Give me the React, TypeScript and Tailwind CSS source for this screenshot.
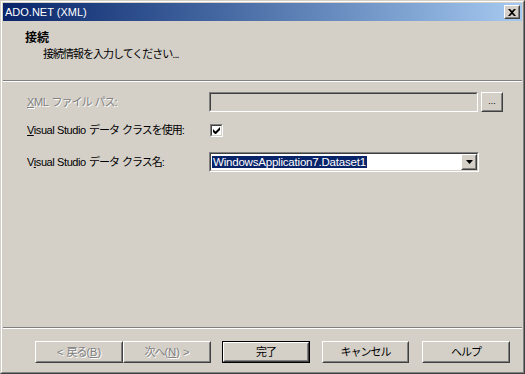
import React from "react";

const font = { fontFamily: '"Liberation Sans", "Noto Sans CJK JP", sans-serif' };

function Raised({ className = "", children }: { className?: string; children?: React.ReactNode }) {
  return (
    <div className={`border border-t-white border-l-white border-r-[#404040] border-b-[#404040] bg-[#d4d0c8] ${className}`}>
      <div className="w-full h-full border border-t-[#d4d0c8] border-l-[#d4d0c8] border-r-[#808080] border-b-[#808080] flex items-center justify-center">
        {children}
      </div>
    </div>
  );
}

function Sunken({ className = "", inner = "", children }: { className?: string; inner?: string; children?: React.ReactNode }) {
  return (
    <div className={`border border-t-[#808080] border-l-[#808080] border-r-white border-b-white ${className}`}>
      <div className={`w-full h-full border border-t-[#404040] border-l-[#404040] border-r-[#d4d0c8] border-b-[#d4d0c8] ${inner}`}>
        {children}
      </div>
    </div>
  );
}

function J({ children }: { children: React.ReactNode }) {
  return <span className="tracking-[-1px]">{children}</span>;
}

function L({ children }: { children: React.ReactNode }) {
  return <span className="tracking-[-0.4px]">{children}</span>;
}

const dis = "text-[#808080] [text-shadow:1px_1px_0_#fff]";
const base = "text-[11px] whitespace-nowrap";

export default function App() {
  return (
    <div style={font} className="w-[525px] h-[374px] bg-[#d4d0c8] text-[12px] text-black leading-none">
      <div className="w-full h-full border border-t-[#d4d0c8] border-l-[#d4d0c8] border-r-[#404040] border-b-[#404040]">
        <div className="w-full h-full border border-t-white border-l-white border-r-[#808080] border-b-[#808080] p-px flex flex-col">
          {/* title bar */}
          <div className="h-[18px] bg-gradient-to-r from-[#0a246a] to-[#a6caf0] flex items-center justify-between pl-[2px] pr-[2px]">
            <span className="text-white text-[11px] whitespace-nowrap">ADO.NET (XML)</span>
            <Raised className="w-[16px] h-[14px]">
              <svg width="8" height="7" viewBox="0 0 8 7">
                <path d="M0 0h2l2 2 2-2h2L5 3.5 8 7H6L4 5 2 7H0l3-3.5z" fill="#000" />
              </svg>
            </Raised>
          </div>
          {/* header */}
          <div className="h-[59px] pl-[22px] pt-[11px]">
            <div className="font-bold text-[12px] whitespace-nowrap">接続</div>
            <div className={`pl-[18px] mt-[5px] ${base}`}><J>接続情報を入力してください...</J></div>
          </div>
          <div className="h-px bg-[#808080]" />
          <div className="h-px bg-white" />
          {/* content */}
          <div className="flex-1 pl-[24px] pt-[10px] flex flex-col">
            <div className="flex items-center h-[20px]">
              <div className={`w-[182px] ${base} ${dis}`}>
                <L><span className="underline">X</span>ML</L> <J>ファイル</J> <J>パス:</J>
              </div>
              <Sunken className="w-[269px] h-[20px]" inner="bg-[#d4d0c8]" />
              <Raised className="ml-[3px] w-[22px] h-[20px]">
                <span className="text-[9px] leading-none -mt-[2px]">...</span>
              </Raised>
            </div>
            <div className="flex items-center h-[13px] mt-[12px]">
              <div className={`w-[183px] ${base}`}>
                <L><span className="underline">V</span>isual Studio</L> <J>データ</J> <J>クラスを使用:</J>
              </div>
              <Sunken className="w-[13px] h-[13px]" inner="bg-white flex items-center justify-center">
                <svg width="7" height="7" viewBox="0 0 7 7">
                  <path d="M0 2v3l2 2h1l4-4V0L2.5 4.5z" fill="#000" />
                </svg>
              </Sunken>
            </div>
            <div className="flex items-center h-[20px] mt-[15px]">
              <div className={`w-[182px] ${base}`}>
                <L>V<span className="underline">i</span>sual Studio</L> <J>データ</J> <J>クラス名:</J>
              </div>
              <Sunken className="w-[270px] h-[20px]" inner="bg-white flex items-center">
                <div className="flex-1 pl-px whitespace-nowrap">
                  <span className="bg-[#0a246a] text-white px-px text-[11.5px] tracking-[-0.2px]">WindowsApplication7.Dataset1</span>
                </div>
                <Raised className="w-[16px] h-[16px]">
                  <svg width="7" height="4" viewBox="0 0 7 4">
                    <path d="M0 0h7L3.5 4z" fill="#000" />
                  </svg>
                </Raised>
              </Sunken>
            </div>
          </div>
          <div className="h-px bg-[#808080]" />
          <div className="h-px bg-white" />
          {/* footer */}
          <div className="h-[42px] flex items-start pt-[12px] pl-[32px]">
            <Raised className="w-[88px] h-[22px]">
              <span className={`${base} ${dis}`}>&lt; <J>戻る</J>(<span className="underline">B</span>)</span>
            </Raised>
            <Raised className="w-[88px] h-[22px]">
              <span className={`${base} ${dis}`}><J>次へ</J>(<span className="underline">N</span>) &gt;</span>
            </Raised>
            <div className="ml-[11px] w-[88px] h-[22px] border border-black">
              <Raised className="w-full h-full">
                <span className={base}><J>完了</J></span>
              </Raised>
            </div>
            <Raised className="ml-[12px] w-[87px] h-[22px]">
              <span className={base}><J>キャンセル</J></span>
            </Raised>
            <Raised className="ml-[13px] w-[88px] h-[22px]">
              <span className={base}><J>ヘルプ</J></span>
            </Raised>
          </div>
        </div>
      </div>
    </div>
  );
}
